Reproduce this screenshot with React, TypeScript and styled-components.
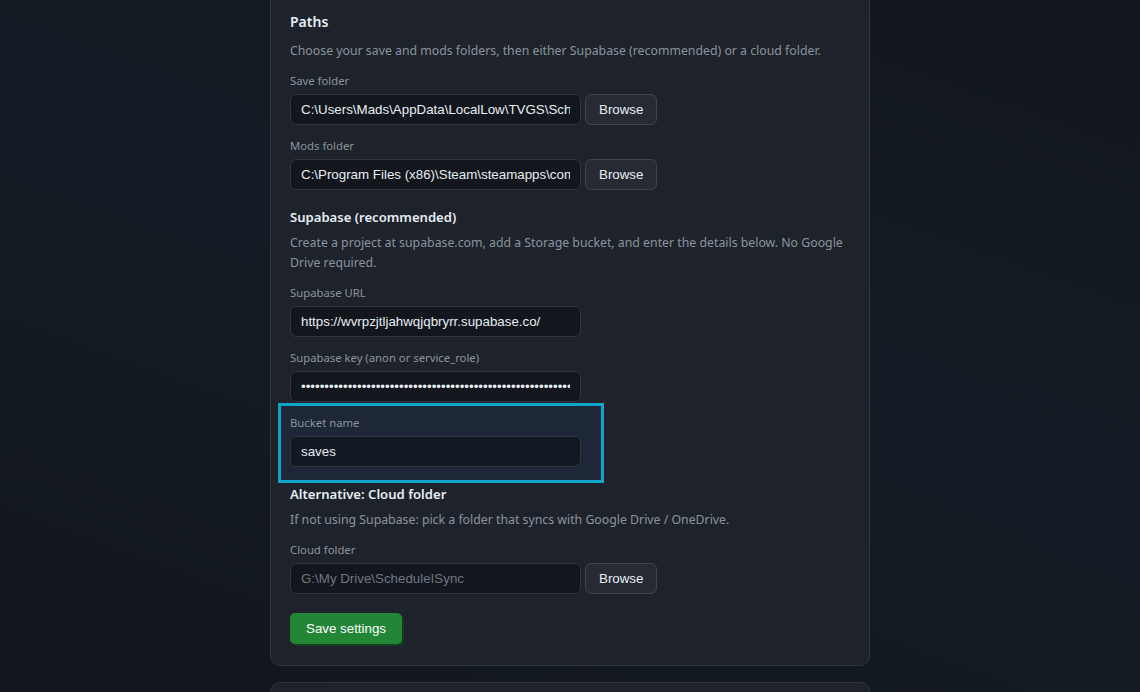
import * as React from 'react';
import styled, { createGlobalStyle } from 'styled-components';

const colors = {
  page: '#12171f',
  card: '#1e232b',
  border: '#30363d',
  text: '#e6edf3',
  muted: '#8b949e',
  placeholder: '#6e7681',
  button: '#262b33',
  buttonBorder: '#3d444d',
  green: '#238636',
  highlight: '#0ea5c8',
};

const uiFont = `"Noto Sans", "Open Sans", sans-serif`;
const controlFont = `"Liberation Sans", Arial, sans-serif`;

const GlobalStyle = createGlobalStyle`
  html, body {
    margin: 0;
    height: 100%;
    overflow: hidden;
  }
  body {
    background: linear-gradient(200deg, #11161d 0%, #161c25 45%, #11161d 100%);
    background-color: ${colors.page};
    font-family: ${uiFont};
    color: ${colors.text};
  }
`;

const Page = styled.main`
  display: flex;
  flex-direction: column;
  align-items: center;
  gap: 16px;
  margin-top: -9px;
`;

const Card = styled.section`
  position: relative;
  z-index: 0;
  box-sizing: border-box;
  width: 600px;
  display: flex;
  flex-direction: column;
  padding: 20px 19px 21px;
  background: ${colors.card};
  border: 1px solid ${colors.border};
  border-radius: 10px;
`;

const NextCard = styled(Card)`
  height: 80px;
`;

const Title = styled.h2`
  margin: 0 0 9px;
  font-size: 14px;
  line-height: 20px;
  font-weight: 600;
  color: ${colors.text};
`;

const SubTitle = styled.h3`
  margin: 4px 0 6px;
  font-size: 13.1px;
  line-height: 20px;
  font-weight: 600;
  color: ${colors.text};
`;

const Hint = styled.p`
  margin: 0 0 12px;
  font-size: 12.3px;
  line-height: 20px;
  color: ${colors.muted};
`;

const Field = styled.div<{ $highlight?: boolean }>`
  position: relative;
  display: flex;
  flex-direction: column;
  margin-bottom: 13px;
  align-self: ${({ $highlight }) => ($highlight ? 'flex-start' : 'stretch')};

  ${({ $highlight }) =>
    $highlight &&
    `
    &::before {
      content: '';
      position: absolute;
      top: -12px;
      left: -12px;
      right: -23px;
      bottom: -16px;
      z-index: -1;
      border: 3px solid ${colors.highlight};
      background: rgba(40, 100, 220, 0.07);
    }
  `}
`;

const Label = styled.label`
  display: block;
  margin-bottom: 5px;
  font-size: 11.3px;
  line-height: 16px;
  color: ${colors.muted};
`;

const Row = styled.div`
  display: flex;
  gap: 4px;
`;

const Input = styled.input`
  box-sizing: border-box;
  width: 291px;
  height: 31px;
  padding: 0 10px;
  font-family: ${controlFont};
  font-size: 13.333px;
  color: ${colors.text};
  background: rgba(8, 11, 16, 0.5);
  border: 1px solid ${colors.border};
  border-radius: 6px;
  outline: none;

  &::placeholder {
    color: ${colors.placeholder};
  }
`;

const BrowseButton = styled.button`
  box-sizing: border-box;
  height: 31px;
  padding: 0 13px;
  font-family: ${controlFont};
  font-size: 13.333px;
  color: ${colors.text};
  background: ${colors.button};
  border: 1px solid ${colors.buttonBorder};
  border-radius: 6px;
  cursor: pointer;
`;

const SaveButton = styled.button`
  align-self: flex-start;
  box-sizing: border-box;
  margin-top: 6px;
  height: 31px;
  padding: 0 16px;
  font-family: ${controlFont};
  font-size: 13.333px;
  color: #ffffff;
  background: ${colors.green};
  border: none;
  border-radius: 5px;
  box-shadow: 2px 2px 0 #163d1e;
  cursor: pointer;
`;

type PathFieldProps = {
  label: string;
  value?: string;
  placeholder?: string;
  browse?: boolean;
  password?: boolean;
  highlight?: boolean;
};

const PathField = ({ label, value, placeholder, browse, password, highlight }: PathFieldProps) => (
  <Field $highlight={highlight}>
    <Label>{label}</Label>
    <Row>
      <Input
        type={password ? 'password' : 'text'}
        value={value}
        placeholder={placeholder}
        readOnly
      />
      {browse && <BrowseButton type="button">Browse</BrowseButton>}
    </Row>
  </Field>
);

const saveFolder = 'C:\\Users\\Mads\\AppData\\LocalLow\\TVGS\\Schedule I\\Saves';
const modsFolder = 'C:\\Program Files (x86)\\Steam\\steamapps\\common\\Schedule I\\Mods';
const cloudPlaceholder = 'G:\\My Drive\\ScheduleISync';
const supabaseKey = 'x'.repeat(80);

export default function App() {
  return (
    <>
      <GlobalStyle />
      <Page>
        <Card>
          <Title>Paths</Title>
          <Hint>Choose your save and mods folders, then either Supabase (recommended) or a cloud folder.</Hint>
          <PathField label="Save folder" value={saveFolder} browse />
          <PathField label="Mods folder" value={modsFolder} browse />

          <SubTitle>Supabase (recommended)</SubTitle>
          <Hint>
            Create a project at supabase.com, add a Storage bucket, and enter the details below. No Google
            Drive required.
          </Hint>
          <PathField label="Supabase URL" value="https://wvrpzjtljahwqjqbryrr.supabase.co/" />
          <PathField label="Supabase key (anon or service_role)" value={supabaseKey} password />
          <PathField label="Bucket name" value="saves" highlight />

          <SubTitle>Alternative: Cloud folder</SubTitle>
          <Hint>If not using Supabase: pick a folder that syncs with Google Drive / OneDrive.</Hint>
          <PathField label="Cloud folder" value="" placeholder={cloudPlaceholder} browse />

          <SaveButton type="button">Save settings</SaveButton>
        </Card>
        <NextCard />
      </Page>
    </>
  );
}
